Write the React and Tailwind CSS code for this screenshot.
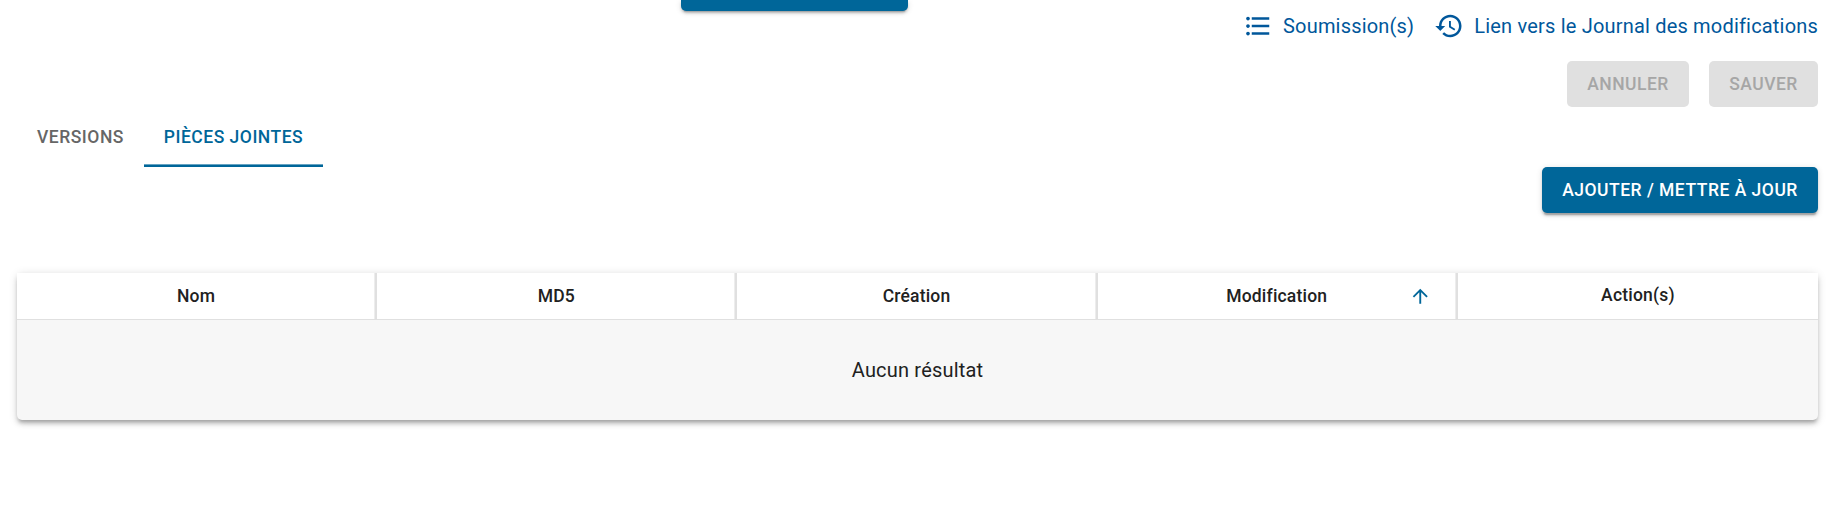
const LIST_PATH =
  'M4 10.5c-.83 0-1.5.67-1.5 1.5s.67 1.5 1.5 1.5 1.5-.67 1.5-1.5-.67-1.5-1.5-1.5zm0-6c-.83 0-1.5.67-1.5 1.5S3.17 7.5 4 7.5 5.5 6.83 5.5 6 4.83 4.5 4 4.5zm0 12c-.83 0-1.5.68-1.5 1.5s.68 1.5 1.5 1.5 1.5-.68 1.5-1.5-.67-1.5-1.5-1.5zM7 19h14v-2H7v2zm0-6h14v-2H7v2zm0-8v2h14V5H7z';
const HISTORY_PATH =
  'M13 3c-4.97 0-9 4.03-9 9H1l3.89 3.89.07.14L9 12H6c0-3.87 3.13-7 7-7s7 3.13 7 7-3.13 7-7 7c-1.93 0-3.68-.79-4.94-2.06l-1.42 1.42C8.27 19.99 10.51 21 13 21c4.97 0 9-4.03 9-9s-4.03-9-9-9zm-1 5v5l4.28 2.54.72-1.21-3.5-2.08V8H12z';
const ARROW_UP_PATH = 'M4 12l1.41 1.41L11 7.83V20h2V7.83l5.58 5.59L20 12l-8-8-8 8z';

function Icon({ path, className }) {
  return (
    <svg viewBox="0 0 24 24" fill="currentColor" className={className} aria-hidden="true">
      <path d={path} />
    </svg>
  );
}

function IconLink({ path, children }) {
  return (
    <a className="flex items-center gap-[10px] text-[#00579b]">
      <Icon path={path} className="size-[30px] shrink-0" />
      <span className="text-[20px] leading-[30px] tracking-[0.19px] whitespace-nowrap">{children}</span>
    </a>
  );
}

const buttonBase =
  'flex h-[46px] items-center justify-center rounded-[5px] text-[17.5px] font-medium tracking-[0.5px] uppercase whitespace-nowrap';
const raised =
  'bg-[#006699] text-white shadow-[0_3.75px_1.25px_-2.5px_rgba(0,0,0,0.2),0_2.5px_2.5px_0_rgba(0,0,0,0.14),0_1.25px_6.25px_0_rgba(0,0,0,0.12)]';

const columns = ['Nom', 'MD5', 'Création', 'Modification', 'Action(s)'];

export default function App() {
  return (
    <div className="h-[518px] overflow-hidden bg-white pr-6 pl-[17px] font-[Roboto,sans-serif] text-[#212121]">
      <header className="flex h-[61px] items-start justify-between">
        <div className={`ml-[664px] h-[11px] w-[227px] rounded-b-[5px] ${raised}`} />
        <nav className="flex gap-5 pt-[11px]">
          <IconLink path={LIST_PATH}>Soumission(s)</IconLink>
          <IconLink path={HISTORY_PATH}>Lien vers le Journal des modifications</IconLink>
        </nav>
      </header>

      <div className="flex h-[46px] justify-end gap-5">
        <button disabled className={`${buttonBase} w-[122px] bg-[#e0e0e0] text-[#a6a6a6]`}>Annuler</button>
        <button disabled className={`${buttonBase} w-[109px] bg-[#e0e0e0] text-[#a6a6a6]`}>Sauver</button>
      </div>

      <div className="flex h-[60px] text-[17.5px] font-medium tracking-[0.5px] uppercase">
        <div className="flex w-[127px] items-center justify-center text-[#666666]">Versions</div>
        <div className="flex w-[179px] flex-col text-[#006699]">
          <div className="flex h-[60px] items-center justify-center">Pièces jointes</div>
          <div className="-mt-[3px] h-[3px] shrink-0 border-t border-[#66a3c2] bg-[#006699]" />
        </div>
      </div>

      <div className="flex justify-end">
        <button className={`${buttonBase} w-[276px] ${raised}`}>Ajouter / Mettre à jour</button>
      </div>

      <section className="mt-[60px] h-[147px] rounded-[5px] bg-[#f7f7f7] shadow-[0_3.75px_3.75px_-2.5px_rgba(0,0,0,0.2),0_3.75px_5px_0_rgba(0,0,0,0.14),0_1.25px_10px_0_rgba(0,0,0,0.12)]">
        <div className="grid h-[47px] grid-cols-5 border-b border-[#e0e0e0] bg-white">
          {columns.map((name, i) => (
            <div
              key={name}
              className={`flex items-center text-[17.5px] font-medium tracking-[0.19px] ${
                i < 4 ? 'border-r-2 border-[#e0e0e0]' : ''
              }`}
            >
              <span className="flex-1 basis-0" />
              <span className={name === 'Action(s)' ? 'pb-px' : ''}>{name}</span>
              <span className="flex h-full flex-1 basis-0 items-center justify-end">
                {name === 'Modification' && (
                  <Icon path={ARROW_UP_PATH} className="mr-[23.5px] size-[22.5px] text-[#006699]" />
                )}
                {i < 4 && <span className="h-full w-px bg-[#ededed]" />}
              </span>
            </div>
          ))}
        </div>
        <div className="flex h-[100px] items-center justify-center text-[20px] tracking-[0.19px]">
          Aucun résultat
        </div>
      </section>
    </div>
  );
}
